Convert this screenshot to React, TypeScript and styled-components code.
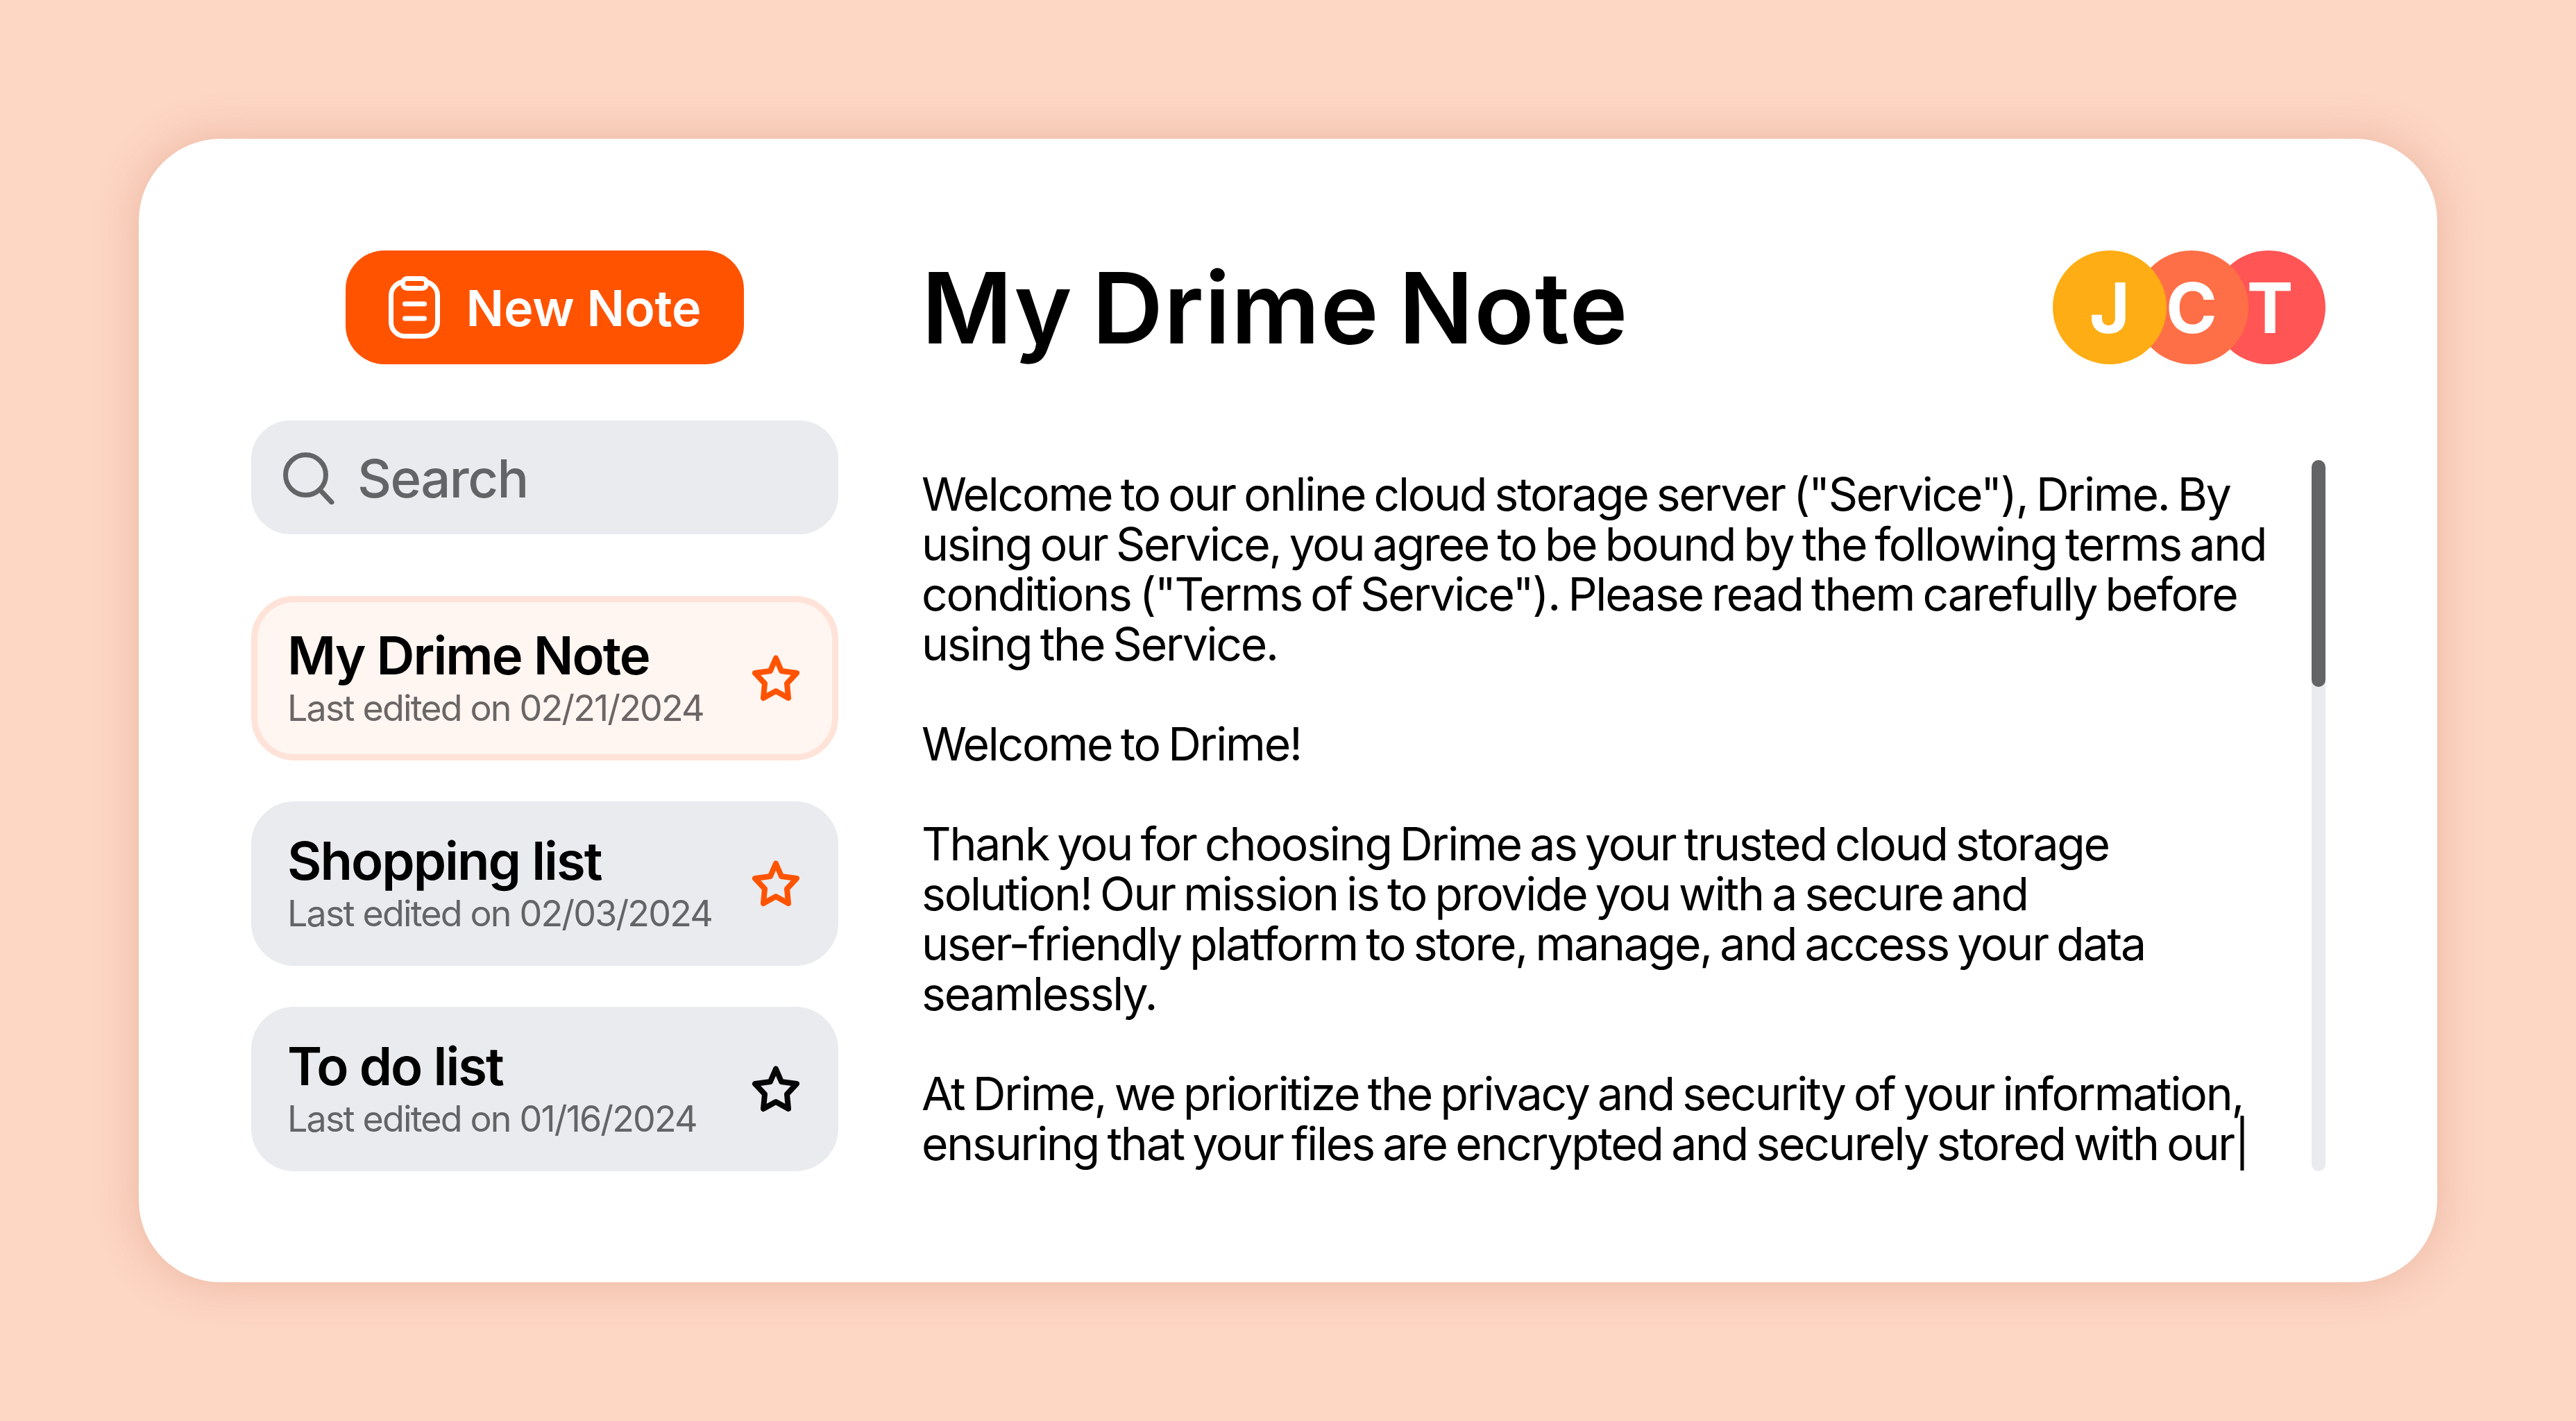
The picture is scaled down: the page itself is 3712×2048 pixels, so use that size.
import React from "react";
import styled, { createGlobalStyle } from "styled-components";

const Global = createGlobalStyle`
  html, body { margin: 0; padding: 0; }
  body { background: #fdd6c4; font-family: "Inter", "Liberation Sans", sans-serif; }
`;

const Page = styled.div`
  width: 3712px;
  height: 2048px;
  box-sizing: border-box;
  padding: 200px;
  background: #fdd6c4;
`;

const Card = styled.main`
  width: 3312px;
  height: 1648px;
  box-sizing: border-box;
  padding: 161px 161px 160px 162px;
  background: #fff;
  border-radius: 118px;
  box-shadow: 0 0 64px rgba(190, 110, 80, 0.3);
  display: grid;
  grid-template-columns: 846px 2023px;
  column-gap: 120px;
`;

const Sidebar = styled.aside`
  display: flex;
  flex-direction: column;
  align-items: stretch;
`;

const NewButton = styled.button`
  align-self: center;
  width: 574px;
  height: 164px;
  border: 0;
  border-radius: 56px;
  background: #ff5300;
  color: #fff;
  display: flex;
  align-items: center;
  justify-content: center;
  gap: 38px;
  font: 600 72px "Inter", sans-serif;
  letter-spacing: -0.2px;
  padding: 0;
`;

const Search = styled.div`
  margin-top: 81px;
  height: 164px;
  box-sizing: border-box;
  border-radius: 56px;
  background: #e9ebee;
  display: flex;
  align-items: center;
  gap: 32px;
  padding: 2px 0 0 46px;
  color: #626465;
  font-size: 76px;
  font-weight: 500;
  letter-spacing: -1.6px;
`;

const Notes = styled.div`
  margin-top: 89px;
  display: flex;
  flex-direction: column;
  gap: 59px;
`;

const Note = styled.div<{ $active?: boolean }>`
  height: 237px;
  box-sizing: border-box;
  border-radius: 62px;
  background: ${(p) => (p.$active ? "#fff5f1" : "#e9ebee")};
  border: ${(p) => (p.$active ? "9px solid #ffe3d8" : "9px solid #e9ebee")};
  display: flex;
  align-items: center;
  justify-content: space-between;
  padding: 0 46px 0 43px;
`;

const NoteText = styled.div`
  display: flex;
  flex-direction: column;
  padding-bottom: 3px;
`;

const NoteTitle = styled.div`
  font-size: 76px;
  line-height: 90px;
  margin: -2px 0 1px;
  font-weight: 600;
  letter-spacing: -2px;
  color: #000;
`;

const NoteDate = styled.div<{ $active?: boolean }>`
  font-size: 52px;
  line-height: 62px;
  letter-spacing: -1.85px;
  color: ${(p) => (p.$active ? "#6a6665" : "#626465")};
`;

const Main = styled.section`
  display: flex;
  flex-direction: column;
`;

const Header = styled.header`
  height: 164px;
  display: flex;
  align-items: center;
  justify-content: space-between;
`;

const Title = styled.h1`
  margin: 0;
  font-size: 142px;
  font-weight: 600;
  letter-spacing: 1px;
  word-spacing: -9px;
  color: #000;
`;

const Avatars = styled.div`
  display: flex;
`;

const Avatar = styled.div<{ $bg: string; $z: number; $overlap: number; $nudge?: number }>`
  width: 164px;
  height: 164px;
  box-sizing: border-box;
  border-radius: 50%;
  background: ${(p) => p.$bg};
  color: #fff;
  font-size: 100px;
  font-weight: 650;
  display: flex;
  align-items: center;
  justify-content: center;
  padding-left: ${(p) => p.$nudge ?? 0}px;
  position: relative;
  z-index: ${(p) => p.$z};
  margin-left: ${(p) => -p.$overlap}px;
`;

const Content = styled.div`
  margin-top: 138px;
  height: 1025px;
  display: flex;
  justify-content: space-between;
`;

const Body = styled.div`
  padding-top: 13px;
  font-size: 66px;
  line-height: 72px;
  letter-spacing: -2.2px;
  word-spacing: -4px;
  color: #000;
  white-space: nowrap;
`;

const Line = styled.div`
  min-height: 72px;
`;

const Track = styled.div`
  flex: none;
  width: 20px;
  height: 100%;
  border-radius: 10px;
  background: #e9ebee;
`;

const Thumb = styled.div`
  width: 20px;
  height: 327px;
  border-radius: 10px;
  background: #626465;
`;

const Star = ({ color }: { color: string }) => (
  <svg width="70" height="67" viewBox="0 0 70 67" fill="none" aria-hidden="true">
    <path
      d="M35 4.5 L43 23 L65 26 L51 41 L53 62 L35 52 L17 62 L19 41 L5 26 L27 23 Z"
      stroke={color}
      strokeWidth="8"
      strokeLinejoin="round"
    />
  </svg>
);

const ClipboardIcon = () => (
  <svg width="74" height="90" viewBox="0 0 74 90" fill="none" stroke="#fff" strokeWidth="7" strokeLinecap="round" strokeLinejoin="round" aria-hidden="true">
    <rect x="3.5" y="8" width="67" height="78.5" rx="20" />
    <rect x="20.5" y="3.5" width="34" height="14" rx="6" fill="#ff5300" />
    <path d="M23.5 40H51.5M23.5 61H51.5" />
  </svg>
);

const SearchIcon = () => (
  <svg width="75" height="75" viewBox="0 0 75 75" fill="none" stroke="#626465" strokeWidth="7" strokeLinecap="round" aria-hidden="true">
    <circle cx="32.5" cy="32.5" r="29" />
    <path d="M54 55 L70 72" />
  </svg>
);

const notes = [
  { title: "My Drime Note", date: "Last edited on 02/21/2024", active: true, star: "#ff5300" },
  { title: "Shopping list", date: "Last edited on 02/03/2024", active: false, star: "#ff5300" },
  { title: "To do list", date: "Last edited on 01/16/2024", active: false, star: "#050505" },
];

const lines = [
  'Welcome to our online cloud storage server ("Service"), Drime. By',
  "using our Service, you agree to be bound by the following terms and",
  'conditions ("Terms of Service"). Please read them carefully before',
  "using the Service.",
  "",
  "Welcome to Drime!",
  "",
  "Thank you for choosing Drime as your trusted cloud storage",
  "solution! Our mission is to provide you with a secure and",
  "user-friendly platform to store, manage, and access your data",
  "seamlessly.",
  "",
  "At Drime, we prioritize the privacy and security of your information,",
  "ensuring that your files are encrypted and securely stored with our|",
];

export default function App() {
  return (
    <Page>
      <Global />
      <Card>
        <Sidebar>
          <NewButton>
            <ClipboardIcon />
            New Note
          </NewButton>
          <Search>
            <SearchIcon />
            Search
          </Search>
          <Notes>
            {notes.map((n) => (
              <Note key={n.title} $active={n.active}>
                <NoteText>
                  <NoteTitle>{n.title}</NoteTitle>
                  <NoteDate $active={n.active}>{n.date}</NoteDate>
                </NoteText>
                <Star color={n.star} />
              </Note>
            ))}
          </Notes>
        </Sidebar>
        <Main>
          <Header>
            <Title>My Drime Note</Title>
            <Avatars>
              <Avatar $bg="#ffad14" $z={3} $overlap={0}>J</Avatar>
              <Avatar $bg="#ff6f47" $z={2} $overlap={46}>C</Avatar>
              <Avatar $bg="#ff5555" $z={1} $overlap={53} $nudge={4}>T</Avatar>
            </Avatars>
          </Header>
          <Content>
            <Body>
              {lines.map((l, i) => (
                <Line key={i}>{l}</Line>
              ))}
            </Body>
            <Track>
              <Thumb />
            </Track>
          </Content>
        </Main>
      </Card>
    </Page>
  );
}
